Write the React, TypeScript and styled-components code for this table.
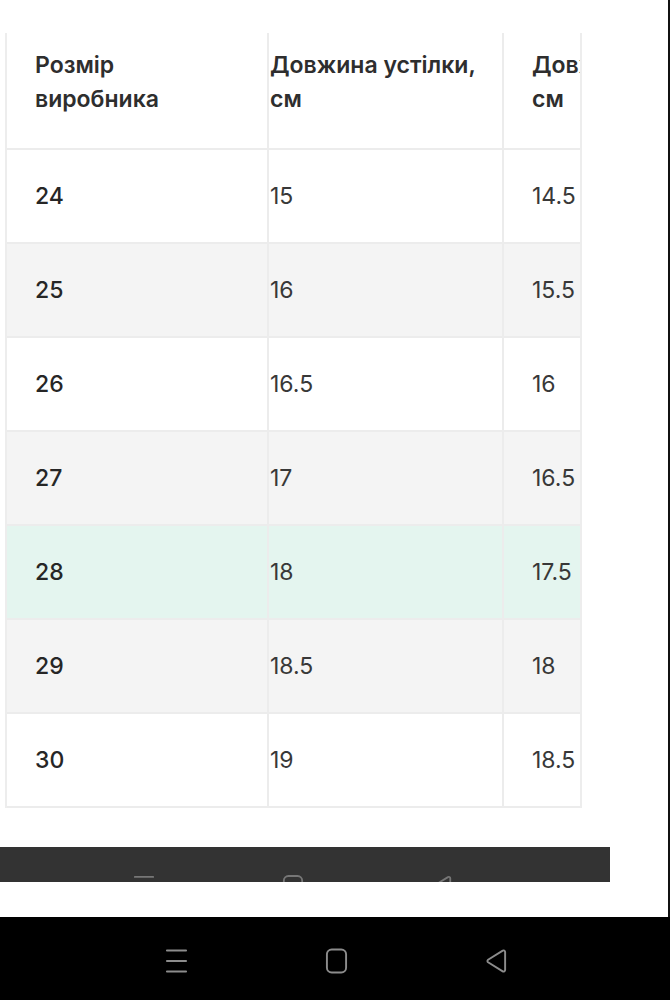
import React from 'react'
import styled, { createGlobalStyle } from 'styled-components'

const GlobalStyle = createGlobalStyle`
  html, body {
    margin: 0;
    padding: 0;
    background: #000;
  }
  body {
    font-family: Inter, "Noto Sans", "Liberation Sans", sans-serif;
  }
`

const rows = [
  { size: '24', insole: '15', foot: '14.5' },
  { size: '25', insole: '16', foot: '15.5' },
  { size: '26', insole: '16.5', foot: '16' },
  { size: '27', insole: '17', foot: '16.5' },
  { size: '28', insole: '18', foot: '17.5', active: true },
  { size: '29', insole: '18.5', foot: '18' },
  { size: '30', insole: '19', foot: '18.5' },
]

const Phone = styled.div`
  width: 670px;
  height: 1000px;
  display: flex;
  flex-direction: column;
  background: #000;
`

const Screen = styled.div`
  height: 917px;
  background: #fff;
  border-right: 2px solid #111;
  box-sizing: border-box;
  padding-top: 33px;
  display: flex;
  flex-direction: column;
`

const TableWrap = styled.div`
  margin-left: 5px;
  width: 577px;
  overflow: hidden;
  border-left: 2px solid #ededed;
  border-right: 2px solid #ededed;
  box-sizing: border-box;
`

const Row = styled.div<{ $tone?: 'white' | 'gray' | 'mint'; $head?: boolean }>`
  display: grid;
  grid-template-columns: 262px 235px 235px;
  height: ${p => (p.$head ? 117 : 94)}px;
  box-sizing: border-box;
  border-bottom: 2px solid #ececec;
  align-items: ${p => (p.$head ? 'start' : 'center')};
  background: ${p =>
    p.$tone === 'gray' ? '#f4f4f4' : p.$tone === 'mint' ? '#e4f5ef' : '#fff'};
`

const Cell = styled.div<{ $pad: number; $right?: number; $strong?: boolean; $last?: boolean }>`
  height: 100%;
  box-sizing: border-box;
  display: flex;
  align-items: center;
  padding-left: ${p => p.$pad}px;
  padding-right: ${p => p.$right ?? 0}px;
  border-right: ${p => (p.$last ? 'none' : '2px solid #ececec')};
  font-size: 23px;
  font-weight: ${p => (p.$strong ? 500 : 400)};
  color: ${p => (p.$strong ? '#262626' : '#383838')};
  white-space: nowrap;
`

const HeadCell = styled(Cell)`
  align-items: flex-start;
  padding-top: 15px;
  font-weight: 600;
  color: #2e2e2e;
  line-height: 34px;
  white-space: normal;
`

const Shot = styled.div`
  margin-top: 39px;
  width: 610px;
  height: 35px;
  background: #333;
  overflow: hidden;
  display: flex;
  align-items: flex-start;
  gap: 127px;
  padding: 28px 0 0 133px;
  box-sizing: border-box;
`

const NavBar = styled.div`
  flex: 1;
  display: flex;
  align-items: flex-start;
  justify-content: center;
  gap: 137px;
  padding-top: 31px;
  padding-left: 2px;
  background: #000;
`

const NavIcon = styled.svg`
  display: block;
  width: 23px;
  height: 26px;
  stroke: #8c8c8c;
  fill: none;
  stroke-width: 2;
  stroke-linecap: round;
  stroke-linejoin: round;
`

const GhostIcon = styled(NavIcon)`
  stroke: #777;
  width: 22px;
  height: 24px;
`

const MenuIcon = ({ as: Comp = NavIcon }: { as?: typeof NavIcon }) => (
  <Comp viewBox="0 0 24 26">
    <path d="M2 2h20M2 13h20M2 24h20" />
  </Comp>
)

const HomeIcon = ({ as: Comp = NavIcon }: { as?: typeof NavIcon }) => (
  <Comp viewBox="0 0 24 26">
    <rect x="2" y="1" width="20" height="24" rx="5" />
  </Comp>
)

const BackIcon = ({ as: Comp = NavIcon }: { as?: typeof NavIcon }) => (
  <Comp viewBox="0 0 24 26">
    <path d="M21 3.5v19a1.6 1.6 0 0 1-2.5 1.3L3.2 14.3a1.6 1.6 0 0 1 0-2.6L18.5 2.2A1.6 1.6 0 0 1 21 3.5z" />
  </Comp>
)

export default function App() {
  return (
    <>
      <GlobalStyle />
      <Phone>
        <Screen>
          <TableWrap>
            <Row $head>
              <HeadCell $pad={28} $right={60}>
                Розмір виробника
              </HeadCell>
              <HeadCell $pad={1} $right={18}>
                Довжина устілки, см
              </HeadCell>
              <HeadCell $pad={28} $right={18} $last>
                Довжина стопи, см
              </HeadCell>
            </Row>
            {rows.map((r, i) => (
              <Row key={r.size} $tone={r.active ? 'mint' : i % 2 ? 'gray' : 'white'}>
                <Cell $pad={28} $strong>
                  {r.size}
                </Cell>
                <Cell $pad={1}>{r.insole}</Cell>
                <Cell $pad={28} $last>
                  {r.foot}
                </Cell>
              </Row>
            ))}
          </TableWrap>
          <Shot>
            <MenuIcon as={GhostIcon} />
            <HomeIcon as={GhostIcon} />
            <BackIcon as={GhostIcon} />
          </Shot>
        </Screen>
        <NavBar>
          <MenuIcon />
          <HomeIcon />
          <BackIcon />
        </NavBar>
      </Phone>
    </>
  )
}
